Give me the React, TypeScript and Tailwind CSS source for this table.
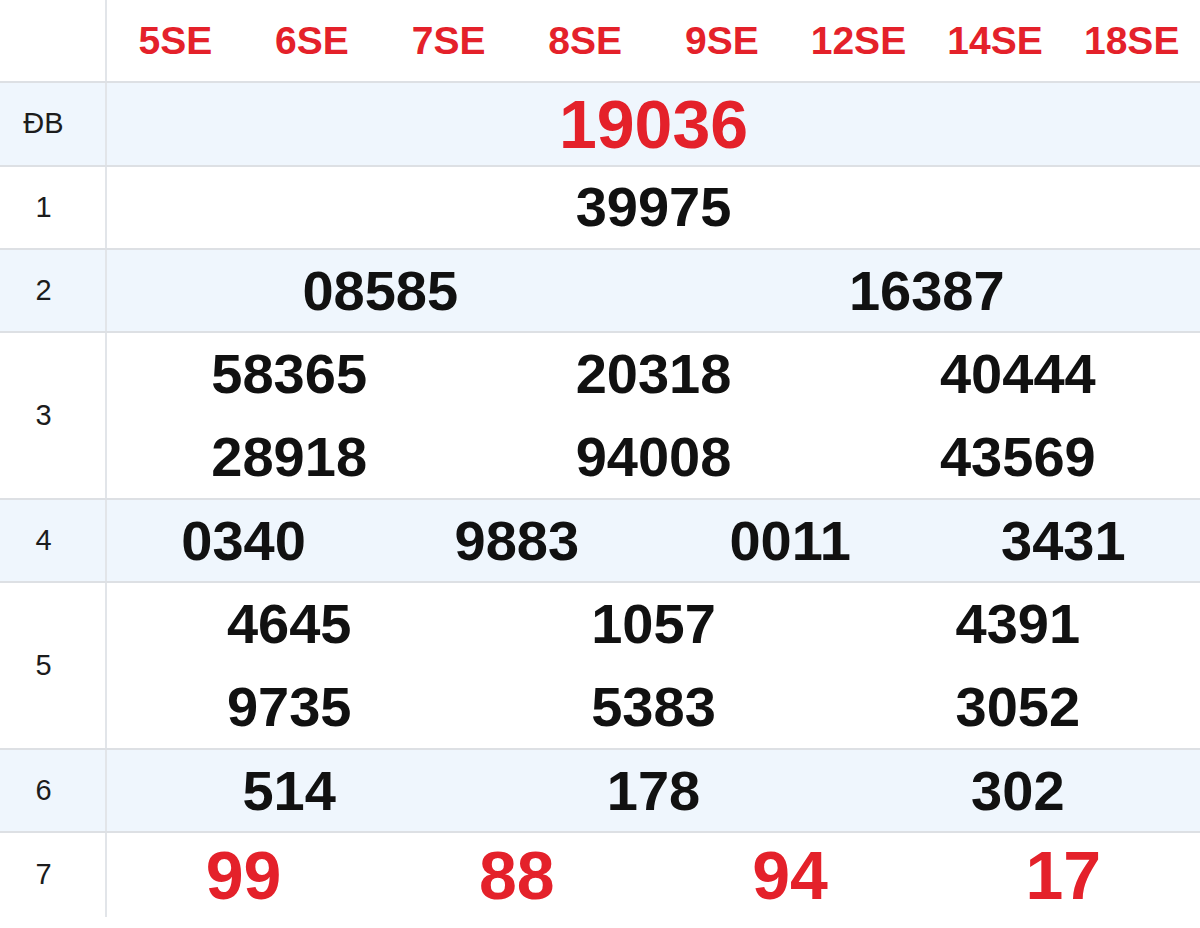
import React from "react";

const RED = "text-[#e4212a]";

type Row = {
  label: string;
  lines: string[][];
  blue: boolean;
  red?: boolean;
  size: string;
  last?: boolean;
};

const rows: Row[] = [
  { label: "ĐB", lines: [["19036"]], blue: true, red: true, size: "text-[68px]" },
  { label: "1", lines: [["39975"]], blue: false, size: "text-[56px]" },
  { label: "2", lines: [["08585", "16387"]], blue: true, size: "text-[56px]" },
  {
    label: "3",
    lines: [
      ["58365", "20318", "40444"],
      ["28918", "94008", "43569"],
    ],
    blue: false,
    size: "text-[56px]",
  },
  { label: "4", lines: [["0340", "9883", "0011", "3431"]], blue: true, size: "text-[56px]" },
  {
    label: "5",
    lines: [
      ["4645", "1057", "4391"],
      ["9735", "5383", "3052"],
    ],
    blue: false,
    size: "text-[56px]",
  },
  { label: "6", lines: [["514", "178", "302"]], blue: true, size: "text-[56px]" },
  { label: "7", lines: [["99", "88", "94", "17"]], blue: false, red: true, size: "text-[68px]", last: true },
];

const headers = ["5SE", "6SE", "7SE", "8SE", "9SE", "12SE", "14SE", "18SE"];

export default function App() {
  return (
    <div className="w-[1200px] h-[928px] bg-white" style={{ fontFamily: '"Liberation Sans", Arial, sans-serif' }}>
      {/* header */}
      <div className="flex h-[83.33px] border-b-2 border-[#dde0e4] bg-white">
        <div className="w-[107px] shrink-0 border-r-2 border-[#e2e5e9]" />
        <div className="flex-1 grid grid-cols-8">
          {headers.map((h) => (
            <div key={h} className={`flex items-center justify-center font-bold text-[39px] leading-none ${RED}`}>
              {h}
            </div>
          ))}
        </div>
      </div>
      {rows.map((r) => (
        <div
          key={r.label}
          className={`flex ${r.blue ? "bg-[#eff6fd]" : "bg-white"} ${r.last ? "" : "border-b-2 border-[#dde0e4]"}`}
          style={{ height: `${83.33 * r.lines.length}px` }}
        >
          <div className="w-[107px] shrink-0 border-r-2 border-[#e2e5e9] flex items-center justify-center pr-[18px] text-[29px] text-[#1c1c1c] leading-none">
            {r.label}
          </div>
          <div className="flex-1 flex flex-col">
            {r.lines.map((line, i) => (
              <div
                key={i}
                className={`flex-1 grid ${
                  line.length === 1
                    ? "grid-cols-1"
                    : line.length === 2
                    ? "grid-cols-2"
                    : line.length === 3
                    ? "grid-cols-3"
                    : "grid-cols-4"
                }`}
              >
                {line.map((n) => (
                  <div
                    key={n}
                    className={`flex items-center justify-center font-bold leading-none ${r.size} ${
                      r.red ? RED : "text-[#111111]"
                    }`}
                  >
                    {n}
                  </div>
                ))}
              </div>
            ))}
          </div>
        </div>
      ))}
    </div>
  );
}
